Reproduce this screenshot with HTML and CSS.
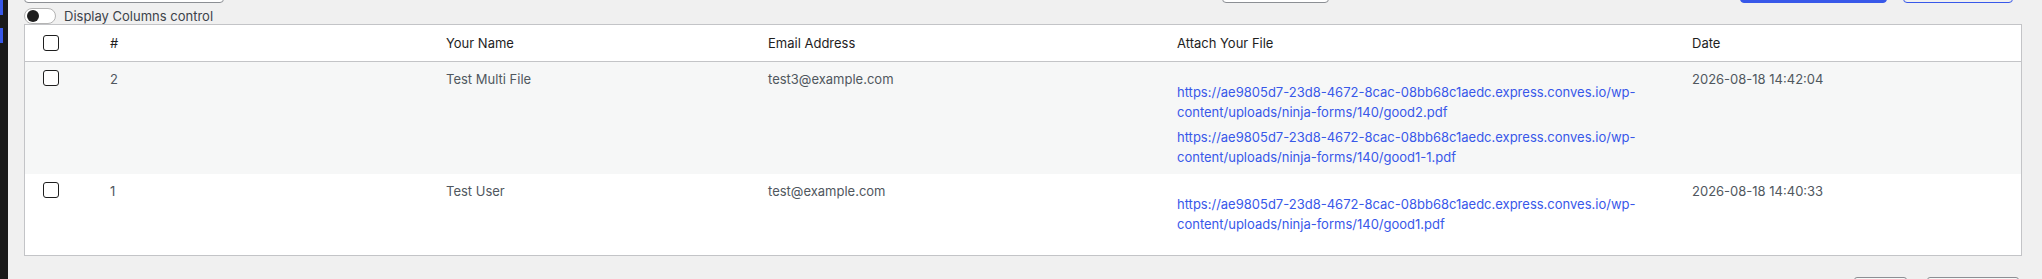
FILE: index.html
```html
<!DOCTYPE html>
<html lang="en">
<head>
<meta charset="utf-8">
<title>Submissions</title>
<link rel="stylesheet" href="styles.css">
</head>
<body>
<div class="layout">
  <aside class="rail">
    <span class="rail-mark"></span>
    <span class="rail-mark"></span>
  </aside>
  <main class="content">
    <div class="toolbar">
      <div class="field field-search"></div>
      <div class="field field-mid"></div>
      <button class="btn btn-primary" type="button"></button>
      <button class="btn btn-outline" type="button"></button>
    </div>

    <label class="toggle-row">
      <span class="toggle"><span class="knob"></span></span>
      <span class="toggle-label">Display Columns control</span>
    </label>

    <div class="table">
      <div class="row head">
        <div class="cell"><input class="check" type="checkbox"></div>
        <div class="cell">#</div>
        <div class="cell">Your Name</div>
        <div class="cell">Email Address</div>
        <div class="cell">Attach Your File</div>
        <div class="cell">Date</div>
      </div>

      <div class="row entry striped">
        <div class="cell"><input class="check" type="checkbox"></div>
        <div class="cell">2</div>
        <div class="cell">Test Multi File</div>
        <div class="cell">test3@example.com</div>
        <div class="cell">
          <div class="files">
            <a class="file-link" href="#">https://ae9805d7-23d8-4672-8cac-08bb68c1aedc.express.conves.io/wp-content/uploads/ninja-forms/140/good2.pdf</a>
            <a class="file-link" href="#">https://ae9805d7-23d8-4672-8cac-08bb68c1aedc.express.conves.io/wp-content/uploads/ninja-forms/140/good1-1.pdf</a>
          </div>
        </div>
        <div class="cell">2026-08-18 14:42:04</div>
      </div>

      <div class="row entry">
        <div class="cell"><input class="check" type="checkbox"></div>
        <div class="cell">1</div>
        <div class="cell">Test User</div>
        <div class="cell">test@example.com</div>
        <div class="cell">
          <div class="files">
            <a class="file-link" href="#">https://ae9805d7-23d8-4672-8cac-08bb68c1aedc.express.conves.io/wp-content/uploads/ninja-forms/140/good1.pdf</a>
          </div>
        </div>
        <div class="cell">2026-08-18 14:40:33</div>
      </div>
    </div>

    <div class="pager">
      <button class="btn btn-grey btn-small" type="button"></button>
      <button class="btn btn-grey btn-wide" type="button"></button>
    </div>
  </main>
</div>
</body>
</html>
```

FILE: styles.css
```css
* {
  box-sizing: border-box;
}

html, body {
  margin: 0;
  height: 279px;
  overflow: hidden;
}

body {
  background: #f0f0f0;
  font-family: Inter, "Noto Sans", "Liberation Sans", sans-serif;
  font-size: 13px;
  line-height: 20px;
  color: #50575e;
}

.layout {
  display: flex;
  min-height: 279px;
}

.rail {
  flex: none;
  width: 8px;
  background: #1a1a1a;
  display: flex;
  flex-direction: column;
  gap: 13px;
}

.rail-mark {
  display: block;
  width: 3px;
  height: 15px;
  background: #3858e9;
}

.content {
  flex: 1;
  min-width: 0;
  padding: 0 20px 0 16px;
}

/* top toolbar, mostly scrolled out of view */
.toolbar {
  display: flex;
  align-items: flex-end;
  height: 32px;
  margin-top: -29px;
}

.field {
  height: 32px;
  border: 1px solid #8c8f94;
  border-radius: 4px;
  background: #fff;
}

.field-search {
  width: 200px;
}

.field-mid {
  width: 107px;
  margin-left: 998px;
}

.btn {
  display: block;
  height: 32px;
  padding: 0;
  border-radius: 4px;
  font: inherit;
}

.btn-primary {
  width: 147px;
  margin-left: 411px;
  background: #3858e9;
  border: 1px solid #3858e9;
}

.btn-outline {
  width: 110px;
  margin-left: 16px;
  background: transparent;
  border: 1px solid #3858e9;
}

/* toggle */
.toggle-row {
  display: flex;
  align-items: center;
  gap: 8px;
  height: 16px;
  margin-top: 5px;
  color: #3c434a;
}

.toggle {
  position: relative;
  display: block;
  width: 32px;
  height: 16px;
  border: 1px solid #b4b4b4;
  border-radius: 8px;
  background: #fff;
}

.knob {
  position: absolute;
  left: 2px;
  top: 1px;
  width: 12px;
  height: 12px;
  border-radius: 50%;
  background: #1e1e1e;
}

/* table */
.table {
  border: 1px solid #c3c4c7;
  background: #fff;
}

.row {
  display: grid;
  grid-template-columns: 67px 336px 322px 409px 515px 1fr;
  padding-left: 18px;
}

.cell {
  min-width: 0;
  padding-right: 10px;
}

.head {
  height: 37px;
  align-items: center;
  border-bottom: 1px solid #c3c4c7;
  color: #1e1e1e;
}

.head .check {
  margin-top: 0;
}

.entry {
  align-items: start;
  padding-top: 7px;
  padding-bottom: 7px;
}

.entry:last-child {
  padding-bottom: 21px;
}

.striped {
  background: #f6f7f7;
}

.check {
  appearance: none;
  -webkit-appearance: none;
  display: block;
  width: 16px;
  height: 16px;
  margin: 1px 0 0;
  border: 1px solid #1e1e1e;
  border-radius: 3px;
  background: #fff;
}

.files {
  display: flex;
  flex-direction: column;
  gap: 5px;
  margin-top: 13px;
}

.file-link {
  display: block;
  color: #3858e9;
  text-decoration: none;
}

/* bottom pagination */
.pager {
  display: flex;
  justify-content: flex-end;
  gap: 20px;
  margin-top: 21px;
  padding-right: 3px;
}

.btn-grey {
  height: 30px;
  background: #f6f7f7;
  border: 1px solid #8c8f94;
  border-radius: 3px;
}

.btn-small {
  width: 53px;
}

.btn-wide {
  width: 92px;
}
```
